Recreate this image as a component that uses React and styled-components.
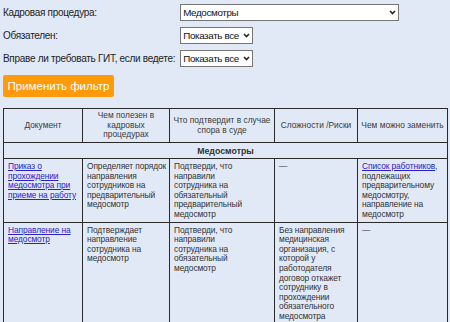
import React from "react";
import styled, { createGlobalStyle } from "styled-components";

const FONT = `"Liberation Sans", Arial, sans-serif`;

const Global = createGlobalStyle`
  html, body { margin: 0; padding: 0; background: #e2e9f6; }
  body { font-family: ${FONT}; color: #222; }
`;

const Page = styled.div`
  padding: 4px 3px 0 3px;
`;

const Filters = styled.div`
  display: grid;
  grid-template-columns: auto auto;
  justify-content: start;
  column-gap: 5px;
  row-gap: 6px;
  align-items: center;
  font-size: 10px;
  letter-spacing: -0.3px;
`;

const Label = styled.label`
  color: #222;
  white-space: nowrap;
`;

const SelectWrap = styled.span`
  position: relative;
  display: inline-block;
  width: ${(p) => p.$w}px;
  height: 17px;
`;

const Select = styled.select`
  appearance: none;
  -webkit-appearance: none;
  box-sizing: border-box;
  font-family: ${FONT};
  font-size: 9.8px;
  letter-spacing: -0.35px;
  height: 17px;
  width: 100%;
  background: #fff;
  border: 1px solid #767676;
  border-radius: 0;
  padding: 0 10px 0 2px;
  color: #111;
  outline: none;
`;

const Chevron = styled.svg`
  position: absolute;
  right: 3px;
  top: 6px;
  width: 7px;
  height: 5px;
  pointer-events: none;
`;

const Button = styled.button`
  display: block;
  margin-top: 8px;
  background: #ff9a0a;
  color: #fff;
  border: none;
  font-family: ${FONT};
  font-size: 11.5px;
  padding: 0;
  height: 22px;
  width: 111px;
  border-radius: 2px;
`;

const Table = styled.table`
  margin-top: 11px;
  width: 444px;
  border-collapse: collapse;
  font-size: 8.4px;
  color: #333;
  table-layout: fixed;
`;

const Th = styled.th`
  box-sizing: border-box;
  border: 1px solid #2a2a2a;
  font-weight: normal;
  line-height: 9.5px;
  padding: 2px 3px;
  height: 34px;
  text-align: center;
  vertical-align: middle;
  color: #3a3a3a;
  width: ${(p) => p.$w}px;
`;

const Td = styled.td`
  border: 1px solid #2a2a2a;
  padding: 3px ${(p) => p.$pr || 2}px 2px 4px;
  vertical-align: top;
  line-height: 9.6px;
  letter-spacing: -0.1px;
`;

const Section = styled.td`
  border: 1px solid #2a2a2a;
  font-weight: bold;
  text-align: center;
  padding: 3px 3px 2px;
  line-height: 10px;
  font-size: 8.8px;
`;

const A = styled.a`
  color: #2a22c8;
  text-decoration: underline;
`;

function Dropdown({ w, value }) {
  return (
    <SelectWrap $w={w}>
      <Select defaultValue="v">
        <option value="v">{value}</option>
      </Select>
      <Chevron viewBox="0 0 7 5">
        <path d="M1 1 L3.5 3.6 L6 1" fill="none" stroke="#222" strokeWidth="1.5" />
      </Chevron>
    </SelectWrap>
  );
}

export default function App() {
  return (
    <Page>
      <Global />
      <Filters>
        <Label>Кадровая процедура:</Label>
        <Dropdown w={219} value="Медосмотры" />
        <Label>Обязателен:</Label>
        <Dropdown w={73} value="Показать все" />
        <Label>Вправе ли требовать ГИТ, если ведете:</Label>
        <Dropdown w={73} value="Показать все" />
      </Filters>
      <Button>Применить фильтр</Button>
      <Table>
        <thead>
          <tr>
            <Th $w={79}>Документ</Th>
            <Th $w={87}>Чем полезен в кадровых процедурах</Th>
            <Th $w={105}>Что подтвердит в случае спора в суде</Th>
            <Th $w={83}>Сложности /Риски</Th>
            <Th $w={90}>Чем можно заменить</Th>
          </tr>
        </thead>
        <tbody>
          <tr>
            <Section colSpan={5}>Медосмотры</Section>
          </tr>
          <tr>
            <Td>
              <A href="#">Приказ о прохождении медосмотра при приеме на работу</A>
            </Td>
            <Td>Определяет порядок направления сотрудников на предварительный медосмотр</Td>
            <Td $pr={16}>Подтверди, что направили сотрудника на обязательный предварительный медосмотр</Td>
            <Td>—</Td>
            <Td>
              <A href="#">Список работников</A>, подлежащих предварительному медосмотру, направление на медосмотр
            </Td>
          </tr>
          <tr>
            <Td>
              <A href="#">Направление на медосмотр</A>
            </Td>
            <Td>Подтверждает направление сотрудника на медосмотр</Td>
            <Td $pr={16}>Подтверди, что направили сотрудника на обязательный медосмотр</Td>
            <Td>Без направления медицинская организация, с которой у работодателя договор откажет сотруднику в прохождении обязательного медосмотра</Td>
            <Td>—</Td>
          </tr>
        </tbody>
      </Table>
    </Page>
  );
}
